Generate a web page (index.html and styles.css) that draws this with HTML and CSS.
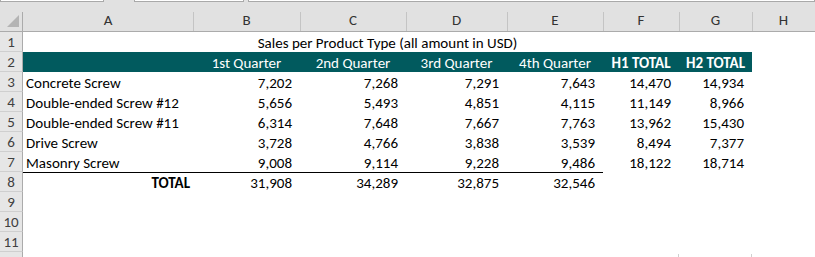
FILE: index.html
```html
<!DOCTYPE html>
<html lang="en">
<head>
  <meta charset="UTF-8" />
  <title>Sales per Product Type</title>
  <link rel="stylesheet" href="styles.css">
</head>
<body>
  <div class="topbar">
    <div class="box box-name"></div>
    <div class="box box-fx"></div>
    <div class="box box-formula"></div>
  </div>

  <div class="sheet">
    <!-- column headers -->
    <div class="corner"></div>
    <div class="ch first">A</div>
    <div class="ch">B</div>
    <div class="ch">C</div>
    <div class="ch">D</div>
    <div class="ch">E</div>
    <div class="ch">F</div>
    <div class="ch">G</div>
    <div class="ch">H</div>

    <!-- row 1 -->
    <div class="rh">1</div>
    <div class="cell title">Sales per Product Type (all amount in USD)</div>
    <div class="cell"></div>

    <!-- row 2 -->
    <div class="rh">2</div>
    <div class="cell hd"></div>
    <div class="cell hd">1st Quarter</div>
    <div class="cell hd">2nd Quarter</div>
    <div class="cell hd">3rd Quarter</div>
    <div class="cell hd">4th Quarter</div>
    <div class="cell hd bold">H1 TOTAL</div>
    <div class="cell hd bold">H2 TOTAL</div>
    <div class="cell"></div>

    <!-- row 3 -->
    <div class="rh">3</div>
    <div class="cell">Concrete Screw</div>
    <div class="cell num">7,202</div>
    <div class="cell num">7,268</div>
    <div class="cell num">7,291</div>
    <div class="cell num">7,643</div>
    <div class="cell num">14,470</div>
    <div class="cell num">14,934</div>
    <div class="cell"></div>

    <!-- row 4 -->
    <div class="rh">4</div>
    <div class="cell">Double-ended Screw #12</div>
    <div class="cell num">5,656</div>
    <div class="cell num">5,493</div>
    <div class="cell num">4,851</div>
    <div class="cell num">4,115</div>
    <div class="cell num">11,149</div>
    <div class="cell num">8,966</div>
    <div class="cell"></div>

    <!-- row 5 -->
    <div class="rh">5</div>
    <div class="cell">Double-ended Screw #11</div>
    <div class="cell num">6,314</div>
    <div class="cell num">7,648</div>
    <div class="cell num">7,667</div>
    <div class="cell num">7,763</div>
    <div class="cell num">13,962</div>
    <div class="cell num">15,430</div>
    <div class="cell"></div>

    <!-- row 6 -->
    <div class="rh">6</div>
    <div class="cell">Drive Screw</div>
    <div class="cell num">3,728</div>
    <div class="cell num">4,766</div>
    <div class="cell num">3,838</div>
    <div class="cell num">3,539</div>
    <div class="cell num">8,494</div>
    <div class="cell num">7,377</div>
    <div class="cell"></div>

    <!-- row 7 -->
    <div class="rh">7</div>
    <div class="cell">Masonry Screw</div>
    <div class="cell num">9,008</div>
    <div class="cell num">9,114</div>
    <div class="cell num">9,228</div>
    <div class="cell num">9,486</div>
    <div class="cell num">18,122</div>
    <div class="cell num">18,714</div>
    <div class="cell"></div>

    <!-- row 8 -->
    <div class="rh">8</div>
    <div class="cell num total-label top-line">TOTAL</div>
    <div class="cell num top-line">31,908</div>
    <div class="cell num top-line">34,289</div>
    <div class="cell num top-line">32,875</div>
    <div class="cell num top-line">32,546</div>
    <div class="cell"></div>
    <div class="cell"></div>
    <div class="cell"></div>

    <!-- empty rows -->
    <div class="rh">9</div>
    <div class="cell span-all"></div>
    <div class="rh">10</div>
    <div class="cell span-all"></div>
    <div class="rh">11</div>
    <div class="cell span-all"></div>
    <div class="rh rh-last"></div>
    <div class="cell span-all last-row">
      <span class="tick tick-f"></span>
      <span class="tick tick-g"></span>
    </div>
  </div>
</body>
</html>
```

FILE: styles.css
```css
/* Base */
* {
  margin: 0;
  padding: 0;
  box-sizing: border-box;
}

body {
  width: 815px;
  height: 257px;
  overflow: hidden;
  background: #fff;
  font-family: Carlito, Lato, "Open Sans", sans-serif;
  font-size: 15px;
  color: #000;
}

/* Formula bar remains */
.topbar {
  display: flex;
  height: 2px;
  background: #e1e1e1;
}

.box {
  height: 2px;
  background: #fff;
  border: 1px solid #a9a9a9;
  border-top: none;
}

.box-name {
  width: 104px;
}

.box-fx {
  width: 110px;
  margin-left: 30px;
}

.box-formula {
  flex: 1;
  margin-left: 4px;
}

/* Sheet grid */
.sheet {
  display: grid;
  grid-template-columns: 23px 170px 107px 106px 101px 96px 76px 73px 1fr;
  grid-template-rows: 30px repeat(11, 20px) 5px;
  background: #e1e1e1;
}

.corner {
  position: relative;
  background: #e1e1e1;
  border-bottom: 1px solid #ababab;
}

/* triangle "select all" */
.corner::before {
  content: "";
  position: absolute;
  left: 7px;
  bottom: 4px;
  width: 12px;
  height: 12px;
  background: #b4b4b4;
  clip-path: polygon(100% 0, 100% 100%, 0 100%);
}

.corner::after {
  content: "";
  position: absolute;
  right: 0;
  bottom: 0;
  width: 1px;
  height: 19px;
  background: #ababab;
}

.ch {
  position: relative;
  display: flex;
  align-items: flex-end;
  justify-content: center;
  padding-bottom: 2px;
  line-height: 17px;
  color: #333;
  background: #e1e1e1;
  border-bottom: 1px solid #ababab;
}

.ch::before {
  content: "";
  position: absolute;
  left: 0;
  bottom: 0;
  width: 1px;
  height: 19px;
  background: #c4c4c4;
}

.ch.first::before {
  display: none;
}

.rh {
  display: flex;
  align-items: flex-end;
  justify-content: center;
  line-height: 17px;
  color: #404040;
  background: #e6e6e6;
  border-right: 1px solid #ababab;
  border-bottom: 1px solid #cfcfcf;
}

.rh-last {
  border-bottom: none;
}

/* Cells */
.cell {
  display: flex;
  align-items: flex-end;
  padding: 0 3px;
  line-height: 17px;
  white-space: nowrap;
  background: #fff;
}

.title {
  grid-column: 2 / 9;
  justify-content: center;
}

.hd {
  justify-content: center;
  color: #fff;
  background: #015a5e;
}

.bold {
  font-weight: 700;
}

.num {
  justify-content: flex-end;
  padding-right: 8px;
}

.total-label {
  font-weight: 700;
  padding-right: 3px;
}

.top-line {
  border-top: 1px solid #000;
}

.span-all {
  grid-column: 2 / 10;
}

/* faint gridline stubs peeking at the bottom edge */
.last-row {
  position: relative;
}

.tick {
  position: absolute;
  bottom: 0;
  width: 1px;
  height: 3px;
  background: #d0d0d0;
}

.tick-f {
  left: 655px;
}

.tick-g {
  left: 728px;
}
```
